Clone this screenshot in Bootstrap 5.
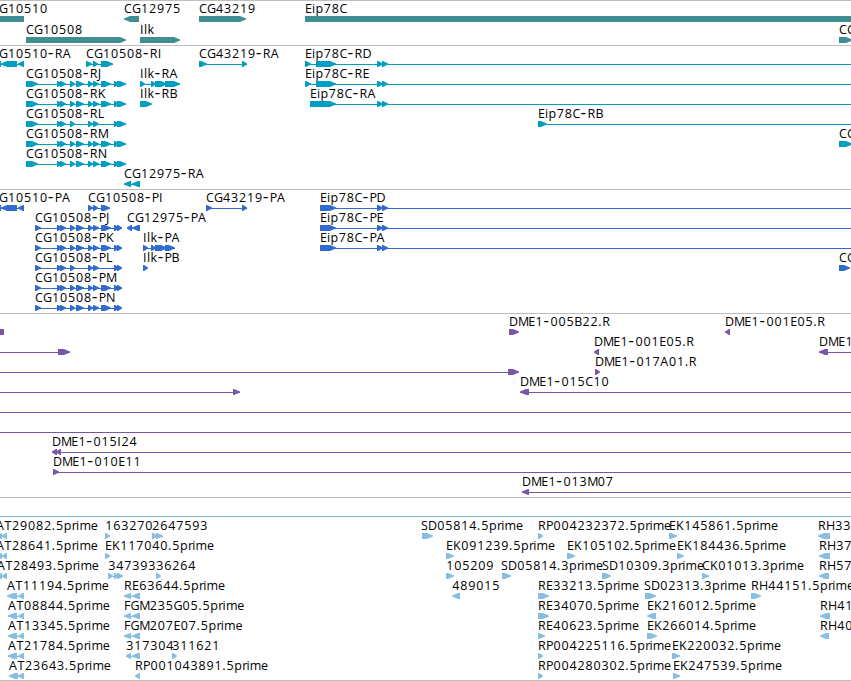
<!DOCTYPE html>
<html lang="en">
<head>
    <meta charset="UTF-8">
    <meta name="viewport" content="width=device-width, initial-scale=1.0">
    <title>Genome Browser - Eip78C region</title>
    <link rel="stylesheet" href="https://cdn.jsdelivr.net/npm/bootstrap@5.3.0/dist/css/bootstrap.min.css">
    <style>
        body {
            background: #fff;
            font-family: "Open Sans", "Noto Sans", "DejaVu Sans", sans-serif;
        }
        .browser {
            width: 851px;
            height: 681px;
            border-bottom: 1px solid #bebebe;
        }
        .track {
            border-top: 1px solid #bebebe;
            padding: 2px 0 1px;
        }
        .track svg {
            display: block;
            width: 851px;
            height: 20px;
            overflow: visible;
            fill: currentColor;
        }
        .track text {
            fill: #000;
            font-size: 12.5px;
        }
        .track .dash {
            font-family: "DejaVu Sans", sans-serif;
            font-size: 16px;
        }
        .track-gene { color: #408e94; padding-bottom: 0; }
        .track-gene svg { height: 21px; }
        .track-mrna { color: #009fc0; }
        .track-cds { color: #316bcf; }
        .track-bac { color: #7857a9; }
        .track-blank { height: 19px; }
        .track-est { color: #88bedf; border-top-color: #88bedf; padding: 3px 0 0; }
    </style>
</head>
<body>
    <main class="browser d-flex flex-column overflow-hidden">
        <section class="track track-gene" data-track="gene"></section>
        <section class="track track-mrna" data-track="mrna"></section>
        <section class="track track-cds" data-track="cds"></section>
        <section class="track track-bac" data-track="bac"></section>
        <section class="track track-blank"></section>
        <section class="track track-est" data-track="est"></section>
    </main>

    <script src="https://cdn.jsdelivr.net/npm/bootstrap@5.3.0/dist/js/bootstrap.bundle.min.js"></script>
    <script>
        // shared exon lists
        const mrnaFull = [[26, 38], [57, 62], [60, 66], [70, 75], [76, 84], [88, 93], [93, 99], [101, 111], [114, 119], [117, 126]];
        const mrnaShort = [[26, 38], [57, 62], [60, 66], [70, 75], [88, 93], [93, 99], [114, 119], [117, 126]];
        const cdsFull = [[35, 41], [57, 62], [60, 66], [70, 75], [76, 84], [88, 93], [93, 99], [101, 111], [114, 119], [117, 122]];
        const cdsShort = [[35, 41], [57, 62], [60, 66], [70, 75], [88, 93], [93, 99], [114, 119], [117, 122]];
        const eipTail = [[377, 383], [382, 388]];

        // feature: [label, label x, strand, exons, intron line]
        const tracks = {
            gene: [
                [['CG10510', -9, 0, [[-5, 24]]], ['CG12975', 124, -1, [[124, 139]]], ['CG43219', 199, 1, [[199, 246]]], ['Eip78C', 305, 0, [[305, 851]]]],
                [['CG10508', 26, 1, [[26, 126]]], ['Ilk', 140, 1, [[140, 180]]], ['CG', 839, 1, [[839, 852]]]]
            ],
            mrna: [
                [['CG10510-RA', -9, -1, [[-6, 1], [1, 17], [18, 24]]], ['CG10508-RI', 86, 1, [[86, 92], [93, 98], [101, 113]]], ['CG43219-RA', 199, 1, [[199, 207], [242, 247]]], ['Eip78C-RD', 305, 1, [[305, 311], [316, 336], ...eipTail], [305, 851]]],
                [['CG10508-RJ', 26, 1, mrnaFull], ['Ilk-RA', 140, 1, [[140, 145], [151, 156], [155, 167], [165, 180]]], ['Eip78C-RE', 305, 1, [[305, 311], [316, 336], ...eipTail], [305, 851]]],
                [['CG10508-RK', 26, 1, mrnaFull], ['Ilk-RB', 140, 1, [[140, 152]]], ['Eip78C-RA', 310, 1, [[310, 336], ...eipTail], [310, 851]]],
                [['CG10508-RL', 26, 1, mrnaShort], ['Eip78C-RB', 538, 1, [[538, 547]], [538, 851]]],
                [['CG10508-RM', 26, 1, mrnaFull], ['CG', 839, 1, [[839, 852]]]],
                [['CG10508-RN', 26, 1, mrnaFull]],
                [['CG12975-RA', 124, -1, [[124, 131], [132, 140]]]]
            ],
            cds: [
                [['CG10510-PA', -9, -1, [[-6, 1], [1, 17], [18, 24]]], ['CG10508-PI', 88, 1, [[88, 93], [93, 98], [101, 110]]], ['CG43219-PA', 206, 1, [[206, 212], [242, 247]]], ['Eip78C-PD', 320, 1, [[320, 336], ...eipTail], [320, 851]]],
                [['CG10508-PJ', 35, 1, cdsFull], ['CG12975-PA', 127, -1, [[127, 132], [132, 140]]], ['Eip78C-PE', 320, 1, [[320, 336], ...eipTail], [320, 851]]],
                [['CG10508-PK', 35, 1, cdsFull], ['Ilk-PA', 143, 1, [[143, 148], [151, 156], [155, 167], [165, 175]]], ['Eip78C-PA', 320, 1, [[320, 336], ...eipTail], [320, 851]]],
                [['CG10508-PL', 35, 1, cdsShort], ['Ilk-PB', 143, 1, [[143, 148]]], ['CG', 839, 1, [[839, 850]]]],
                [['CG10508-PM', 35, 1, cdsFull]],
                [['CG10508-PN', 35, 1, cdsFull]]
            ],
            bac: [
                [['', 0, 0, [[0, 4]]], ['DME1-005B22.R', 509, 1, [[509, 519]]], ['DME1-001E05.R', 725, -1, [[725, 730]]]],
                [['', 0, 1, [[58, 70]], [0, 70]], ['DME1-001E05.R', 594, -1, [[594, 599]]], ['DME1', 819, -1, [[819, 828]], [819, 851]]],
                [['', 0, 1, [[508, 519]], [0, 519]], ['DME1-017A01.R', 595, 1, [[595, 600]]]],
                [['', 0, 1, [[233, 240]], [0, 240]], ['DME1-015C10', 520, -1, [[520, 529]], [520, 851]]],
                [['', 0, 1, [], [0, 851]]],
                [['', 0, 1, [], [0, 851]]],
                [['DME1-015I24', 52, -1, [[52, 57], [56, 61]], [52, 851]]],
                [['DME1-010E11', 53, 1, [[53, 59]], [53, 851]]],
                [['DME1-013M07', 522, -1, [[522, 529]], [522, 851]]]
            ],
            est: [
                [['AT29082.5prime', -4, -1, [[-3, 2], [2, 7]]], ['163270', 105, 1, [[105, 110]]], ['2647593', 152, 1, [[152, 158], [156, 163]]], ['SD05814.5prime', 421, 1, [[422, 433]]], ['RP004232372.5prime', 538, 1, [[538, 543]]], ['EK145861.5prime', 669, 1, [[669, 677]]], ['RH33', 818, -1, [[818, 830]]]],
                [['AT28641.5prime', -4, -1, [[-3, 2], [2, 7]]], ['EK117040.5prime', 105, 1, [[105, 110]]], ['EK091239.5prime', 446, 1, [[446, 454]]], ['EK105102.5prime', 567, 1, [[567, 575]]], ['EK184436.5prime', 677, 1, [[677, 684]]], ['RH37', 819, -1, [[819, 830]]]],
                [['AT28493.5prime', -3, -1, [[-3, 2], [2, 7]]], ['347393', 108, 1, [[108, 113], [114, 119], [117, 123]]], ['36264', 156, 1, [[156, 161]]], ['105209', 446, 1, [[446, 454]]], ['SD05814.3prime', 501, 1, [[502, 511]]], ['SD10309.3prime', 602, 1, [[602, 611]]], ['CK01013.3prime', 702, 1, [[702, 709]]], ['RH57', 819, -1, [[819, 829]]]],
                [['AT11194.5prime', 7, -1, [[7, 17], [18, 24]]], ['RE63644.5prime', 124, -1, [[124, 131], [132, 140]]], ['489015', 452, -1, [[452, 460]]], ['RE33213.5prime', 538, 1, [[538, 549]]], ['SD02313.3prime', 644, 1, [[645, 656]]], ['RH44151.5prime', 751, 1, [[751, 761]]]],
                [['AT08844.5prime', 8, -1, [[8, 17], [18, 24]]], ['FGM235G05.5prime', 124, -1, [[124, 131], [132, 140]]], ['RE34070.5prime', 538, 1, [[538, 549]]], ['EK216012.5prime', 647, -1, [[647, 656]]], ['RH41', 820, -1, [[820, 830]]]],
                [['AT13345.5prime', 8, -1, [[8, 17], [18, 24]]], ['FGM207E07.5prime', 124, -1, [[124, 131], [132, 140]]], ['RE40623.5prime', 538, 1, [[538, 545]]], ['EK266014.5prime', 647, 1, [[647, 657]]], ['RH40', 820, -1, [[820, 829]]]],
                [['AT21784.5prime', 8, -1, [[8, 17], [18, 24]]], ['317304', 126, -1, [[126, 131], [132, 140]]], ['311621', 172, 1, [[172, 177]]], ['RP004225116.5prime', 538, 1, [[538, 543]]], ['EK220032.5prime', 672, 1, [[672, 680]]]],
                [['AT23643.5prime', 9, -1, [[9, 18], [18, 24]]], ['RP001043891.5prime', 135, -1, [[135, 140]]], ['RP004280302.5prime', 538, 1, [[538, 543]]], ['EK247539.5prime', 673, 1, [[673, 680]]]]
            ]
        };

        // label letter pitch in px, digits and everything else use 8
        const pitch = { A: 8.5, T: 7.3, C: 8, G: 8.8, D: 9, E: 7, F: 6.5, H: 9, I: 4, J: 4, L: 7, M: 10.2, N: 9, P: 7.2, S: 7, '-': 7, '.': 4, r: 4.2, i: 3.4, m: 11.3, e: 7, k: 7, l: 3.4 };

        function label(text, x) {
            const xs = [];
            for (const ch of text) {
                xs.push((x + (/\d/.test(ch) ? 0.3 : 0)).toFixed(1));
                x += pitch[ch] || 8;
            }
            return `<text y="10" x="${xs.join(' ')}">${text.replace('-', '<tspan class="dash">-</tspan>')}</text>`;
        }

        function exon(a, b, strand) {
            if (!strand) return `<path d="M${a} 13H${b}V19H${a}Z"/>`;
            const head = Math.min(b - a, 7);
            return strand > 0
                ? `<path d="M${a} 13H${b - head + 1}L${b} 15.5V16.5L${b - head + 1} 19H${a}Z"/>`
                : `<path d="M${b} 13H${a + head - 1}L${a} 15.5V16.5L${a + head - 1} 19H${b}Z"/>`;
        }

        document.querySelectorAll('[data-track]').forEach(track => {
            track.innerHTML = tracks[track.dataset.track].map(row => {
                let shapes = '', labels = '';
                row.forEach(([text, x, strand, exons, line]) => {
                    if (!line && exons.length > 1) line = [exons[0][0], exons[exons.length - 1][1]];
                    if (line) shapes += `<rect x="${line[0]}" y="16" width="${line[1] - line[0]}" height="1"/>`;
                    shapes += exons.map(e => exon(e[0], e[1], strand)).join('');
                    if (text) labels += label(text, x);
                });
                return `<svg>${shapes}${labels}</svg>`;
            }).join('');
        });
    </script>
</body>
</html>
